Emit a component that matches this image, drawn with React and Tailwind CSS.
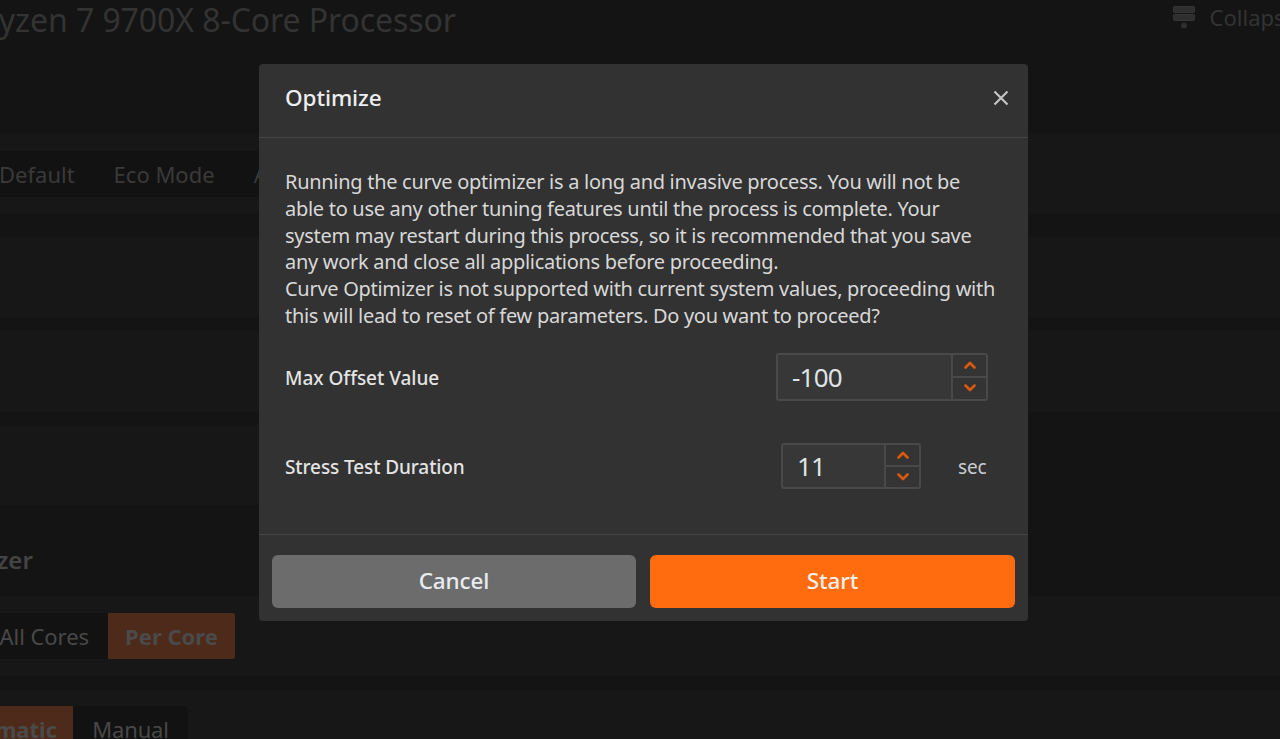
import React from "react";

function Chevron({ up }) {
  return (
    <svg width="12" height="8" viewBox="0 0 12 8" fill="none" stroke="#d9590f" strokeWidth="2.6" strokeLinecap="round" strokeLinejoin="round">
      <path d={up ? "M1.5 6.5 6 2l4.5 4.5" : "M1.5 1.5 6 6l4.5-4.5"} />
    </svg>
  );
}

function Spin({ value, width, boxHeight, field }) {
  return (
    <div className={`flex ${width} ${boxHeight} rounded-[3px] border-2 border-[#494949] bg-[#373737]`}>
      <div className={`flex ${field} items-center pl-[14px] text-[26px] leading-none text-[#dfe3e6] tracking-[-0.8px]`}>{value}</div>
      <div className="flex flex-1 flex-col border-l-2 border-[#494949] bg-[#343434]">
        <div className="flex flex-1 items-center justify-center border-b-2 border-[#494949]"><Chevron up /></div>
        <div className="flex flex-1 items-center justify-center"><Chevron /></div>
      </div>
    </div>
  );
}

export default function App() {
  return (
    <div className="relative h-[739px] w-[1280px] overflow-hidden bg-[#141414] font-['Noto_Sans',sans-serif]">
      {/* dimmed page behind the dialog */}
      <div className="flex h-[134px] items-start justify-between">
        <div className="-ml-[21px] mt-[-1px] whitespace-nowrap text-[32px] leading-[42px] tracking-[-0.08px] text-[#333333]">Ryzen 7 9700X 8-Core Processor</div>
        <div className="flex items-center">
          <svg width="22" height="24" viewBox="0 0 22 24" className="mt-[4px] mr-[15px]" fill="#2e2e2e" stroke="#363636">
            <rect x="0.5" y="0.5" width="21" height="6" rx="1" />
            <rect x="0.5" y="8.5" width="21" height="6" rx="1" />
            <circle cx="11" cy="19.5" r="3" stroke="none" />
          </svg>
          <div className="-mr-[17px] mt-[2px] whitespace-nowrap text-[22px] leading-[30px] text-[#333333]">Collapse</div>
        </div>
      </div>

      <div className="flex h-[79px] items-start bg-[#171717] pt-[17px]">
        <div className="-ml-[1px] flex h-[46px] items-center gap-[39px] bg-[#121212] pr-[20px] text-[22px] tracking-[0px] text-[#3a3a3a]">
          <span>Default</span>
          <span>Eco Mode</span>
          <span>Advanced</span>
        </div>
      </div>
      <div className="h-[24px]" />
      <div className="h-[81px] bg-[#171717]" />
      <div className="h-[13px]" />
      <div className="h-[81px] bg-[#171717]" />
      <div className="h-[13px]" />
      <div className="h-[80px] w-[640px] bg-[#171717]" />

      <div className="flex h-[91px] items-start">
        <div className="-ml-[158px] mt-[39px] whitespace-nowrap text-[24px] font-semibold leading-[32px] text-[#444444]">Curve Optimizer</div>
      </div>

      <div className="flex h-[80px] items-start bg-[#171717] pt-[17px]">
        <div className="-ml-[1px] flex h-[46px] w-[109px] items-center justify-end whitespace-nowrap bg-[#121212] pr-[19px] text-[22px] tracking-[-0.05px] text-[#484848]">All Cores</div>
        <div className="flex h-[46px] w-[127px] items-center justify-center rounded-r-[3px] bg-[#4d2a1a] text-[22px] font-bold tracking-[0px] text-[#4a4a4a]">Per Core</div>
      </div>
      <div className="h-[14px]" />
      <div className="flex h-[49px] items-start bg-[#171717] pt-[16px]">
        <div className="flex h-[46px] w-[73px] items-center justify-end overflow-hidden whitespace-nowrap bg-[#4d2a1a] pr-[16px] text-[22px] font-bold text-[#4a4a4a]">
          <span className="shrink-0">Automatic</span>
        </div>
        <div className="flex h-[46px] w-[115px] items-center justify-center rounded-tr-[5px] bg-[#121212] text-[22px] tracking-[-0.2px] text-[#484848]">Manual</div>
      </div>

      {/* dialog */}
      <div className="absolute left-[259px] top-[64px] flex h-[557px] w-[769px] flex-col rounded-[4px] bg-[#323232]">
        <div className="flex h-[74px] shrink-0 items-center justify-between border-b border-[#454545] pb-[5px] pl-[26px] pr-[19px]">
          <div className="text-[22.5px] font-medium leading-none tracking-[-0.1px] text-[#eceef0]">Optimize</div>
          <svg width="16" height="16" viewBox="0 0 16 16" fill="none" stroke="#c4c4c4" strokeWidth="2.2">
            <path d="M1.5 1.5 14.5 14.5M14.5 1.5 1.5 14.5" />
          </svg>
        </div>

        <div className="flex-1 pl-[26px] pr-[40px] pt-[31px]">
          <p className="whitespace-nowrap text-[20px] leading-[26.8px] tracking-[-0.29px] text-[#d8d8d8]">
            Running the curve optimizer is a long and invasive process. You will not be<br />
            able to use any other tuning features until the process is complete. Your<br />
            system may restart during this process, so it is recommended that you save<br />
            any work and close all applications before proceeding.<br />
            Curve Optimizer is not supported with current system values, proceeding with<br />
            this will lead to reset of few parameters. Do you want to proceed?
          </p>
          <div className="mt-[23px] flex items-center justify-between">
            <div className="pt-[2px] text-[19px] font-medium tracking-[-0.02px] text-[#e4e4e4]">Max Offset Value</div>
            <Spin value="-100" width="w-[212px]" boxHeight="h-[48px]" field="w-[173px]" />
          </div>
          <div className="mt-[42px] flex items-center justify-between">
            <div className="pt-[2px] text-[19px] font-medium tracking-[-0.1px] text-[#e4e4e4]">Stress Test Duration</div>
            <div className="flex items-center">
              <Spin value="11" width="w-[140px]" boxHeight="h-[46px]" field="w-[101px]" />
              <div className="ml-[37px] w-[30px] pt-[2px] text-[19px] tracking-[-0.2px] text-[#c8ccd0]">sec</div>
            </div>
          </div>
        </div>

        <div className="flex h-[87px] shrink-0 gap-[14px] border-t border-[#454545] px-[13px] pt-[20px]">
          <button className="flex h-[53px] w-[364px] items-center justify-center rounded-[6px] bg-[#6c6c6c] pb-[2px] text-[22.5px] font-medium tracking-[-0.1px] text-[#e8ecef]">Cancel</button>
          <button className="flex h-[53px] w-[365px] items-center justify-center rounded-[6px] bg-[#ff6b0f] pb-[2px] text-[22.5px] font-medium tracking-[-0.1px] text-[#f4f0ec]">Start</button>
        </div>
      </div>
    </div>
  );
}
